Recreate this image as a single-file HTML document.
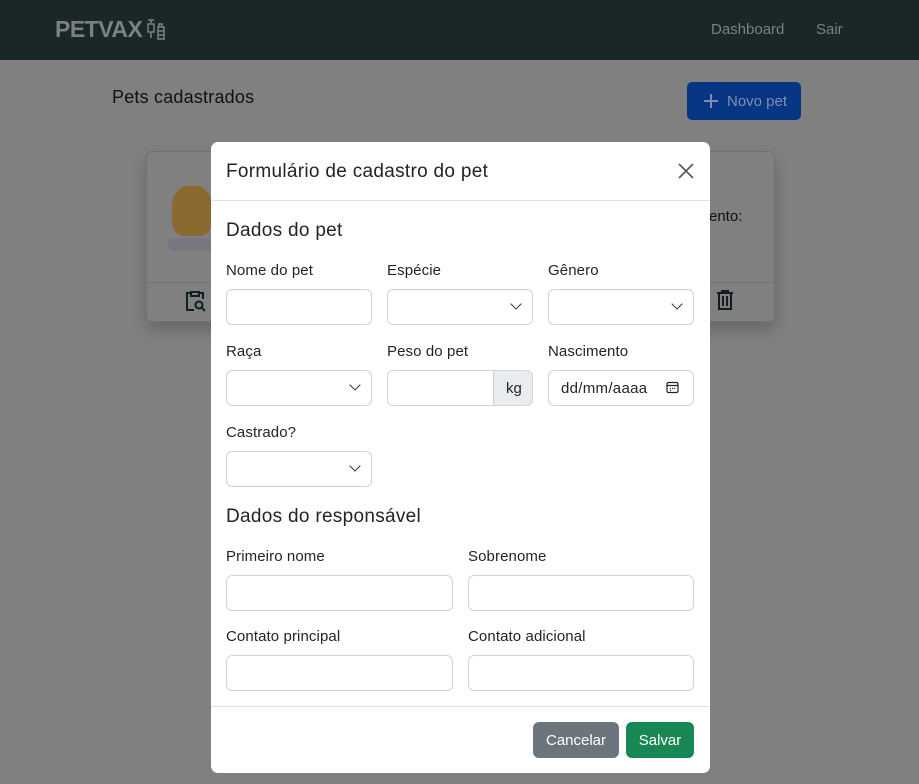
<!DOCTYPE html>
<html><head><meta charset="utf-8"><style>
*{box-sizing:border-box;margin:0;padding:0}
body{width:919px;height:784px;position:relative;overflow:hidden;background:#808080;font-family:"Liberation Sans",sans-serif;color:#212529}
.a{position:absolute}
.nav{left:0;top:0;width:919px;height:60px;background:#1a2728}
.inp{position:absolute;height:36px;border:1px solid #ced4da;border-radius:6px;background:#fff}
.lbl{position:absolute;font-size:15px;color:#212529;letter-spacing:0.1px}
.chev{position:absolute;right:12px;top:10px;width:8px;height:8px;border-right:1.6px solid #333;border-bottom:1.6px solid #333;transform:rotate(45deg)}
.h{position:absolute;font-size:19px;letter-spacing:0.3px}
</style></head><body>
<div class="a nav"></div>
<div class="a" style="left:55px;top:16px;font-size:23px;font-weight:bold;color:#7c807f;letter-spacing:-0.5px">PETVAX</div>
<svg class="a" style="left:146px;top:18px" width="20" height="22" viewBox="0 0 20 22" fill="none" stroke="#7c807f" stroke-width="1.5"><path d="M2 2h6M5 2v3M2 6h6v8H2zM5 14v6M12 6h5M13 6v3h3V6M12 9h6v12h-6zM12 13h6M12 17h6"/></svg>
<div class="a" style="left:711px;top:21px;font-size:15px;color:#7c807f">Dashboard</div>
<div class="a" style="left:816px;top:21px;font-size:15px;color:#7c807f">Sair</div>
<div class="a" style="left:112px;top:87px;font-size:18px;color:#111;letter-spacing:0.2px">Pets cadastrados</div>
<div class="a" style="left:687px;top:82px;width:114px;height:38px;background:#063683;border-radius:5px;color:#7f8eae;font-size:15px;padding:11px 0 0 40px">Novo pet</div>
<div class="a" style="left:704px;top:100px;width:14px;height:2px;background:#7f8eae"></div>
<div class="a" style="left:710px;top:94px;width:2px;height:14px;background:#7f8eae"></div>
<div class="a" style="left:146px;top:151px;width:629px;height:171px;border:1px solid #727272;border-radius:6px;box-shadow:0 8px 16px rgba(0,0,0,.2)"></div>
<div class="a" style="left:146px;top:282px;width:629px;height:1px;background:#727272"></div>
<div class="a" style="left:172px;top:186px;width:40px;height:50px;background:#8a6a30;border-radius:40% 40% 30% 30%"></div>
<div class="a" style="left:168px;top:238px;width:45px;height:13px;background:#77777f;border-radius:6px"></div>
<svg class="a" style="left:185px;top:290px" width="22" height="22" viewBox="0 0 22 22" fill="none" stroke="#0f1e1e" stroke-width="2"><path d="M6 3H2v17h7M14 3h4v6M6 2h8v4H6z"/><circle cx="14" cy="15" r="3.5"/><path d="M17 18l3 3"/></svg>
<svg class="a" style="left:716px;top:290px" width="18" height="20" viewBox="0 0 18 20" fill="none" stroke="#0f1e1e" stroke-width="2"><path d="M1 3h16M6 3V1h6v2M3 3v16h12V3M7 6v10M11 6v10"/></svg>
<div class="a" style="left:709px;top:208px;font-size:15px;color:#111">ento:</div>

<div class="a" style="left:211px;top:142px;width:499px;height:631px;background:#fff;border-radius:7px"></div>
<div class="h" style="left:226px;top:161px">Formulário de cadastro do pet</div>
<svg class="a" style="left:678px;top:163px" width="16" height="16" viewBox="0 0 16 16" stroke="#555" stroke-width="1.6"><path d="M1 1l14 14M15 1L1 15"/></svg>
<div class="a" style="left:211px;top:200px;width:499px;height:1px;background:#dee2e6"></div>
<div class="h" style="left:226px;top:220px">Dados do pet</div>
<div class="lbl" style="left:226px;top:262px">Nome do pet</div>
<div class="lbl" style="left:387px;top:262px">Espécie</div>
<div class="lbl" style="left:548px;top:262px">Gênero</div>
<div class="inp" style="left:226px;top:289px;width:146px"></div>
<div class="inp" style="left:387px;top:289px;width:146px"><div class="chev"></div></div>
<div class="inp" style="left:548px;top:289px;width:146px"><div class="chev"></div></div>
<div class="lbl" style="left:226px;top:343px">Raça</div>
<div class="lbl" style="left:387px;top:343px">Peso do pet</div>
<div class="lbl" style="left:548px;top:343px">Nascimento</div>
<div class="inp" style="left:226px;top:370px;width:146px"><div class="chev"></div></div>
<div class="inp" style="left:387px;top:370px;width:146px;overflow:hidden"><div style="position:absolute;left:105px;top:0;width:41px;height:34px;background:#e9ecef;border-left:1px solid #ced4da;font-size:15px;padding:9px 0 0 12px">kg</div></div>
<div class="inp" style="left:548px;top:370px;width:146px;font-size:15px;padding:9px 0 0 12px;letter-spacing:0.3px">dd/mm/aaaa<svg style="position:absolute;left:117px;top:10px" width="13" height="13" viewBox="0 0 13 13" fill="none" stroke="#222" stroke-width="1.2"><rect x="1" y="1.5" width="11" height="10" rx="1.5"/><path d="M1 4.5h11M4 7.5h1M6 7.5h1M8 7.5h1M4 9.5h1"/></svg></div>
<div class="lbl" style="left:226px;top:424px">Castrado?</div>
<div class="inp" style="left:226px;top:451px;width:146px"><div class="chev"></div></div>
<div class="h" style="left:226px;top:506px">Dados do responsável</div>
<div class="lbl" style="left:226px;top:548px">Primeiro nome</div>
<div class="lbl" style="left:468px;top:548px">Sobrenome</div>
<div class="inp" style="left:226px;top:575px;width:227px"></div>
<div class="inp" style="left:468px;top:575px;width:226px"></div>
<div class="lbl" style="left:226px;top:628px">Contato principal</div>
<div class="lbl" style="left:468px;top:628px">Contato adicional</div>
<div class="inp" style="left:226px;top:655px;width:227px"></div>
<div class="inp" style="left:468px;top:655px;width:226px"></div>
<div class="a" style="left:211px;top:706px;width:499px;height:1px;background:#dee2e6"></div>
<div class="a" style="left:533px;top:722px;width:86px;height:36px;background:#6c757d;border-radius:6px;color:#fff;font-size:15px;text-align:center;line-height:38px">Cancelar</div>
<div class="a" style="left:626px;top:722px;width:68px;height:36px;background:#198754;border-radius:6px;color:#fff;font-size:15px;text-align:center;line-height:38px">Salvar</div>
</body></html>
